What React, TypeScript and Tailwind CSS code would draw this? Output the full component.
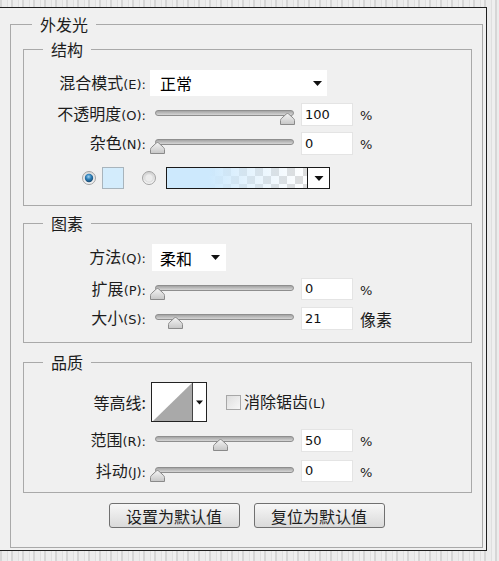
import { ReactNode } from "react";

const latin = "font-['DejaVu_Sans',sans-serif] text-[13px]";

function Label({ zh, en, width = "w-[122px]" }: { zh: string; en?: string; width?: string }) {
  return (
    <div className={`${width} shrink-0 text-right leading-[20px] text-[#1c1c1c]`}>
      {zh}
      {en && <span className={latin}>{en}</span>}
    </div>
  );
}

function Arrow({ w = 9 }: { w?: number }) {
  return (
    <svg width={w} height={5} viewBox="0 0 9 5">
      <polygon points="0,0 9,0 4.5,5" fill="#111" />
    </svg>
  );
}

function Slider({ pos }: { pos: number }) {
  return (
    <div className="relative ml-[4px] h-[23px] w-[144px] shrink-0">
      <div className="ml-[5px] mt-[7px] h-[6px] w-[139px] rounded-full border border-[#8e8e8e] bg-gradient-to-b from-[#a4a4a4] to-[#d6d6d6]" />
      {/* thumb */}
      <svg className="absolute top-[10px]" style={{ left: pos }} width="15" height="12" viewBox="0 0 15 12">
        <defs>
          <linearGradient id="th" x1="0" y1="0" x2="0" y2="1">
            <stop offset="0" stopColor="#f4f4f4" />
            <stop offset="1" stopColor="#c6c6c6" />
          </linearGradient>
        </defs>
        <path
          d="M0.5 11.5 V7.5 Q0.5 6.3 1.6 5.3 L6.3 1 Q7.5 0 8.7 1 L13.4 5.3 Q14.5 6.3 14.5 7.5 V11.5 Z"
          fill="url(#th)"
          stroke="#8a8a8a"
        />
      </svg>
    </div>
  );
}

function NumBox({ value, h = "h-[23px]" }: { value: string; h?: string }) {
  return (
    <div className={`ml-[7px] flex ${h} w-[52px] shrink-0 items-center border border-[#e4e4e4] bg-white pl-[3px] font-['DejaVu_Sans',sans-serif] text-[13px] text-[#111]`}>
      {value}
    </div>
  );
}

function Unit({ children }: { children: ReactNode }) {
  return <div className="ml-[7px] leading-[20px] text-[#1c1c1c]">{children}</div>;
}

function Percent() {
  return (
    <Unit>
      <span className="font-['DejaVu_Sans',sans-serif] text-[13px]">%</span>
    </Unit>
  );
}

function Group({ title, className, children }: { title: string; className?: string; children: ReactNode }) {
  return (
    <fieldset className={`ml-[12px] w-[449px] border border-[#a9a9a9] ${className ?? ""}`}>
      <legend className="ml-[19px] px-2 leading-[20px] text-[#1c1c1c]">{title}</legend>
      {children}
    </fieldset>
  );
}

function Radio({ on }: { on: boolean }) {
  return (
    <svg width="14" height="14" viewBox="0 0 14 14" className="shrink-0">
      <defs>
        <linearGradient id={on ? "ro" : "rf"} x1="0" y1="0" x2="0" y2="1">
          <stop offset="0" stopColor={on ? "#dcdcdc" : "#d0d0d0"} />
          <stop offset="1" stopColor={on ? "#f6f6f6" : "#f8f8f8"} />
        </linearGradient>
        <radialGradient id="rd" cx="0.45" cy="0.35" r="0.7">
          <stop offset="0" stopColor="#9fd3f3" />
          <stop offset="0.45" stopColor="#2e7fb8" />
          <stop offset="1" stopColor="#153f63" />
        </radialGradient>
      </defs>
      <circle cx="7" cy="7" r="6.5" fill={`url(#${on ? "ro" : "rf"})`} stroke="#a3a3a3" />
      {on ? (
        <circle cx="7" cy="7" r="4.2" fill="url(#rd)" />
      ) : (
        <circle cx="7" cy="7" r="4.2" fill="#ececec" stroke="#d6d6d6" strokeWidth="0.8" />
      )}
    </svg>
  );
}

export default function App() {
  const stripes =
    "bg-[repeating-linear-gradient(90deg,#d6d6d6_0px,#d6d6d6_2px,#ececec_2px,#ececec_7px,#dfdfdf_7px,#dfdfdf_8px,#efefef_8px,#efefef_11px)]";

  return (
    <div className={`h-[561px] w-[499px] overflow-hidden pt-[7px] ${stripes} font-['Noto_Sans_CJK_SC',sans-serif] text-[16px]`}>
      <div className="h-[544px] w-[487px] border-b border-r border-t border-[#1f1f1f] bg-[#f0f0f0] pt-[6px]">
        <fieldset className="ml-[10px] w-[473px] border border-[#a9a9a9] pb-[19px] pt-[5px]">
          <legend className="ml-[21px] px-2 leading-[20px] text-[#1c1c1c]">外发光</legend>

          {/* 结构 */}
          <Group title="结构" className="pb-[16px]">
            <div className="mt-[11px] flex h-[26px] items-center">
              <Label zh="混合模式" en="(E):" />
              <div className="ml-[4px] flex h-[26px] w-[177px] items-center justify-between bg-white pl-[10px] pr-[5px]">
                <span className="leading-[20px]">正常</span>
                <Arrow />
              </div>
            </div>
            <div className="mt-[7px] flex h-[23px] items-center">
              <Label zh="不透明度" en="(O):" />
              <Slider pos={130} />
              <NumBox value="100" />
              <Percent />
            </div>
            <div className="mt-[6px] flex h-[23px] items-center">
              <Label zh="杂色" en="(N):" />
              <Slider pos={0} />
              <NumBox value="0" />
              <Percent />
            </div>
            <div className="ml-[58px] mt-[12px] flex h-[22px] items-center">
              <Radio on={true} />
              <div className="ml-[6px] h-[22px] w-[22px] border border-[#a8b4bc] bg-[#d3ecfc]" />
              <div className="ml-[18px]">
                <Radio on={false} />
              </div>
              <div className="ml-[10px] flex h-[22px] w-[164px] border border-[#1a1a1a]">
                <div className="h-full flex-1 [background:linear-gradient(90deg,#cde9fd_0%,#cde9fd_30%,rgba(205,233,253,0.5)_60%,rgba(205,233,253,0)_100%),repeating-conic-gradient(#dddddd_0_25%,#ffffff_0_50%)_0_0/16px_16px]" />
                <div className="flex h-full w-[22px] items-center justify-center border-l border-[#1a1a1a] bg-white">
                  <Arrow w={10} />
                </div>
              </div>
            </div>
          </Group>

          {/* 图素 */}
          <Group title="图素" className="mt-[7px] pb-[12px]">
            <div className="mt-[11px] flex h-[27px] items-center">
              <Label zh="方法" en="(Q):" />
              <div className="ml-[6px] flex h-[27px] w-[74px] items-center justify-between bg-white pl-[8px] pr-[6px]">
                <span className="leading-[20px]">柔和</span>
                <Arrow />
              </div>
            </div>
            <div className="mt-[7px] flex h-[22px] items-center">
              <Label zh="扩展" en="(P):" />
              <Slider pos={0} />
              <NumBox value="0" h="h-[22px]" />
              <Percent />
            </div>
            <div className="mt-[7px] flex h-[23px] items-center">
              <Label zh="大小" en="(S):" />
              <Slider pos={18} />
              <NumBox value="21" />
              <Unit>像素</Unit>
            </div>
          </Group>

          {/* 品质 */}
          <Group title="品质" className="mt-[9px] pb-[10px]">
            <div className="mt-[10px] flex h-[40px] items-center">
              <Label zh="等高线:" />
              <div className="ml-[5px] flex h-[40px] w-[56px] border border-[#222]">
                <svg width="40" height="38" viewBox="0 0 40 38" className="bg-white">
                  <polygon points="1,38 40,0 40,38" fill="#a9a9a9" />
                </svg>
                <div className="flex flex-1 items-center justify-center border-l border-[#444] bg-white">
                  <Arrow w={7} />
                </div>
              </div>
              <div className="ml-[19px] h-[15px] w-[15px] border border-[#a7a7a7] bg-gradient-to-br from-[#dedede] to-[#f7f7f7]" />
              <div className="ml-[3px] leading-[20px] text-[#1c1c1c]">
                消除锯齿<span className={latin}>(L)</span>
              </div>
            </div>
            <div className="mt-[7px] flex h-[23px] items-center">
              <Label zh="范围" en="(R):" />
              <Slider pos={63} />
              <NumBox value="50" />
              <Percent />
            </div>
            <div className="mt-[8px] flex h-[22px] items-center">
              <Label zh="抖动" en="(J):" />
              <Slider pos={0} />
              <NumBox value="0" h="h-[22px]" />
              <Percent />
            </div>
          </Group>

          <div className="mt-[10px] flex justify-center gap-[14px]">
            <button className="flex h-[25px] w-[131px] items-center justify-center rounded-[3px] border border-[#707070] bg-gradient-to-b from-[#f7f7f7] to-[#dadada] leading-[20px] text-[#1c1c1c]">
              设置为默认值
            </button>
            <button className="flex h-[25px] w-[131px] items-center justify-center rounded-[3px] border border-[#707070] bg-gradient-to-b from-[#f7f7f7] to-[#dadada] leading-[20px] text-[#1c1c1c]">
              复位为默认值
            </button>
          </div>
        </fieldset>
      </div>
    </div>
  );
}
